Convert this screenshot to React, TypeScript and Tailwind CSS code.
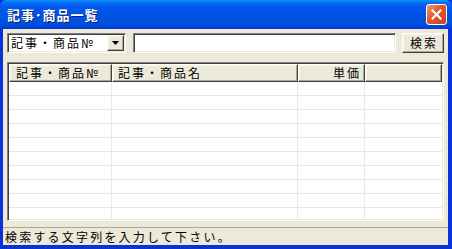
const rows = Array.from({ length: 10 });

const raised =
  "border border-t-white border-l-white border-r-[#404040] border-b-[#404040] shadow-[inset_-1px_-1px_0_#aca899,inset_1px_1px_0_#f5f4ee]";
const sunken =
  "border border-t-[#808080] border-l-[#808080] border-r-white border-b-white shadow-[inset_1px_1px_0_#404040,inset_-1px_-1px_0_#ece9d8]";

export default function App() {
  return (
    <div
      className="w-[452px] h-[249px] flex flex-col bg-[#0831d9] overflow-hidden text-[12px] text-black"
      style={{ fontFamily: '"Noto Sans CJK JP", "Noto Sans", sans-serif' }}
    >
      {/* title bar */}
      <div className="h-[29px] shrink-0 flex items-center justify-between pl-[7px] pr-[5px] bg-[linear-gradient(180deg,#0997ff_0%,#0a6af5_10%,#0058ee_25%,#0054e3_55%,#0050dd_80%,#003dd7_100%)] rounded-t-[6px]">
        <span className="text-white font-bold text-[13px] tracking-[1px] [text-shadow:1px_1px_0_#0a1e6b]">
          記事･商品一覧
        </span>
        <button className="w-[21px] h-[21px] rounded-[3px] border border-white bg-[linear-gradient(135deg,#f09a7c_0%,#e2572f_45%,#c8431c_100%)] flex items-center justify-center">
          <svg width="11" height="11" viewBox="0 0 11 11">
            <path d="M1.5 1.5 L9.5 9.5 M9.5 1.5 L1.5 9.5" stroke="white" strokeWidth="2.2" strokeLinecap="square" />
          </svg>
        </button>
      </div>

      {/* body */}
      <div className="flex-1 flex flex-col ml-[3px] mr-[4px] mb-[4px] bg-[#ece9d8]">
        {/* search row */}
        <div className="flex items-center h-[20px] mt-[4px] ml-[4px] mr-[4px]">
          <div className={`w-[119px] h-[20px] flex bg-white ${sunken}`}>
            <span className="flex-1 pl-[3px] leading-[18px] text-[12px] tracking-[2px] whitespace-nowrap overflow-hidden">
              記事・商品№
            </span>
            <div className={`w-[17px] h-[16px] mt-[1px] mr-[1px] bg-[#ece9d8] flex items-center justify-center ${raised}`}>
              <svg width="7" height="4" viewBox="0 0 7 4">
                <path d="M0 0 H7 L3.5 4 Z" fill="black" />
              </svg>
            </div>
          </div>
          <div className={`ml-[7px] w-[263px] h-[20px] bg-white ${sunken}`} />
          <button className={`ml-[6px] w-[42px] h-[20px] bg-[#ece9d8] text-[12px] leading-[16px] tracking-[2px] pl-[2px] ${raised}`}>
            検索
          </button>
        </div>

        {/* list */}
        <div className={`mt-[9px] ml-[4px] mr-[4px] h-[159px] bg-white flex flex-col overflow-hidden ${sunken}`}>
          <div className="flex h-[18px] shrink-0 ml-[1px] mt-[1px]">
            <div className={`w-[103px] pl-[6px] leading-[15px] tracking-[2px] whitespace-nowrap overflow-hidden bg-[#ece9d8] ${raised}`}>記事・商品№</div>
            <div className={`w-[186px] pl-[5px] leading-[15px] tracking-[2px] bg-[#ece9d8] ${raised}`}>記事・商品名</div>
            <div className={`w-[67px] pr-[3px] text-right leading-[15px] tracking-[2px] bg-[#ece9d8] ${raised}`}>単価</div>
            <div className={`w-[77px] bg-[#ece9d8] ${raised}`} />
          </div>
          {rows.map((_, i) => (
            <div key={i} className="flex h-[14px] shrink-0 ml-[1px] border-b border-[#ebe8dc]">
              <div className="w-[103px] border-r border-[#ebe8dc]" />
              <div className="w-[186px] border-r border-[#ebe8dc]" />
              <div className="w-[67px] border-r border-[#ebe8dc]" />
              <div className="w-[77px]" />
            </div>
          ))}
        </div>

        {/* status bar */}
        <div className="mt-[6px] border-t border-[#aca899] flex-1 flex items-center pl-[2px]">
          <span className="text-[12px] tracking-[2.2px] leading-[16px]">検索する文字列を入力して下さい。</span>
        </div>
      </div>
    </div>
  );
}
